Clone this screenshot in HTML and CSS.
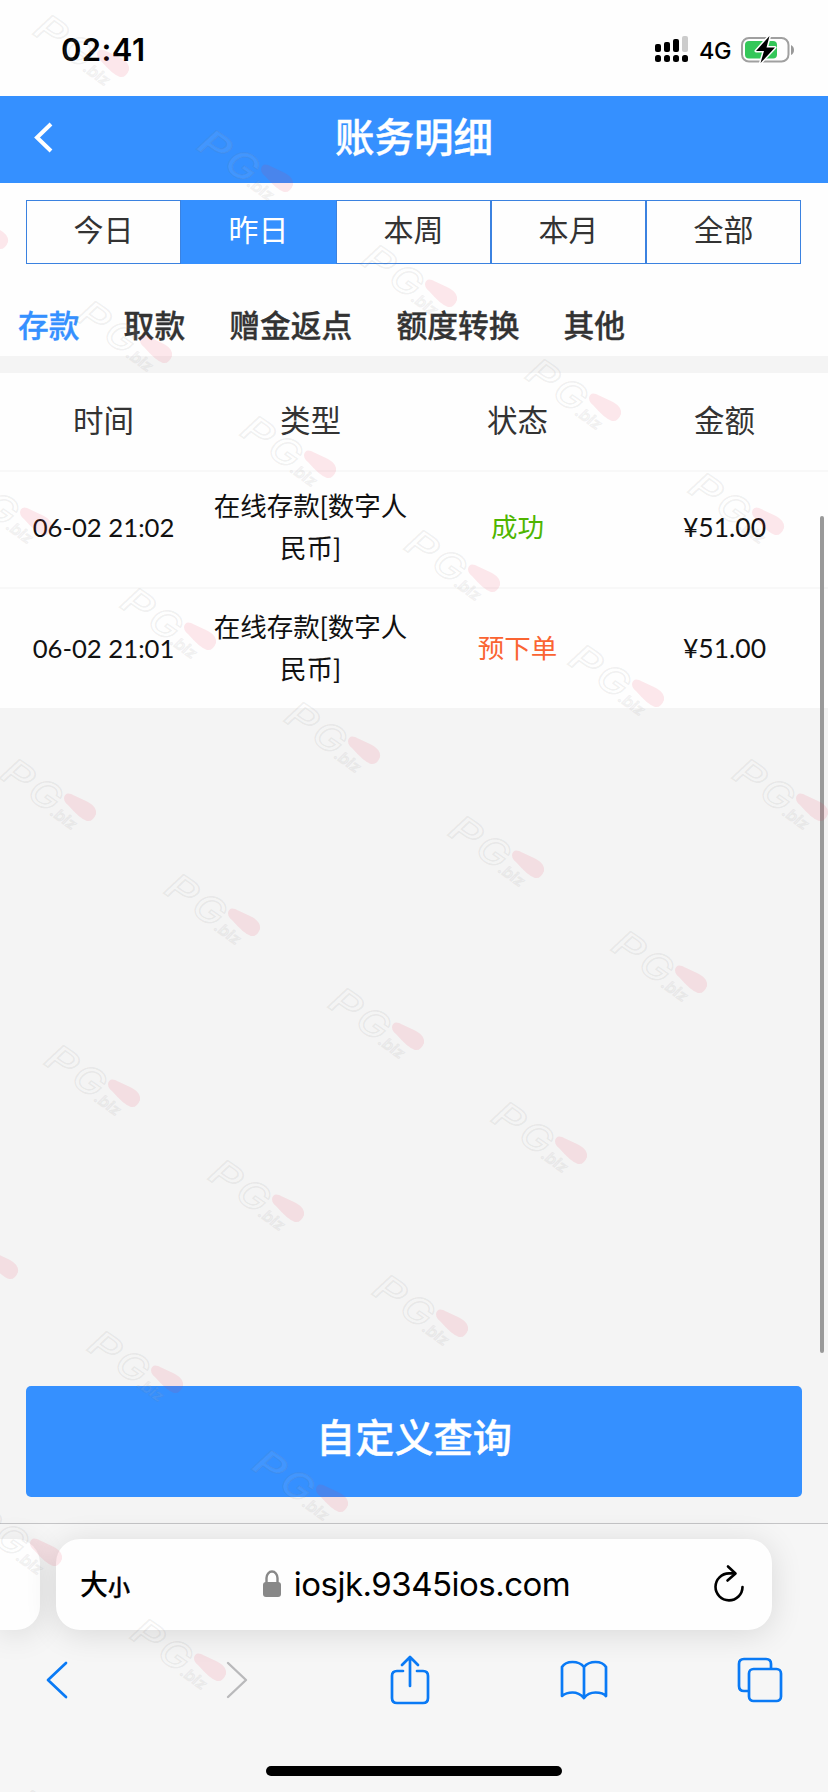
FILE: index.html
```html
<!DOCTYPE html>
<html lang="zh-CN">
<head>
<meta charset="utf-8">
<title>账务明细</title>
<link rel="stylesheet" href="styles.css">
</head>
<body>
<div class="phone">
  <div class="status">
    <span class="time">02:41</span>
    <div class="status-right">
      <svg class="signal" width="34" height="28" viewBox="0 0 34 28">
        <rect x="0" y="8" width="6" height="8" rx="2"/><rect x="9" y="6" width="6" height="10" rx="2"/><rect x="18" y="3" width="6" height="13" rx="2"/><rect x="27" y="0" width="6" height="16" rx="2" fill="#ccc"/>
        <rect x="0" y="19" width="6" height="7" rx="2.5"/><rect x="9" y="19" width="6" height="7" rx="2.5"/><rect x="18" y="19" width="6" height="7" rx="2.5"/><rect x="27" y="19" width="6" height="7" rx="2.5"/>
      </svg>
      <span class="net">4G</span>
      <svg class="battery" width="54" height="28" viewBox="0 0 54 28">
        <rect x="1" y="2" width="46.500" height="23.500" rx="7" fill="none" stroke="#a0a0a0" stroke-width="2"/>
        <rect x="4" y="5" width="32" height="17.500" rx="4" fill="#34c759"/>
        <path d="M50 9q3 1.500 3 5t-3 5z" fill="#999"/>
        <path d="M28.500 0 15 15h8l-3.500 12L34 11.500h-8.500z" fill="#000" stroke="#fff" stroke-width="3" paint-order="stroke" stroke-linejoin="round"/>
      </svg>
    </div>
  </div>

  <header class="header">
    <svg class="back" width="20" height="32" viewBox="0 0 20 32"><path d="M17 2 3 15.500 17 29" fill="none" stroke="#fff" stroke-width="4"/></svg>
    <h1 class="title">账务明细</h1>
  </header>

  <main class="page">
    <div class="ranges">
      <span class="range">今日</span><span class="range active">昨日</span><span class="range">本周</span><span class="range">本月</span><span class="range">全部</span>
    </div>
    <nav class="kinds">
      <span class="kind current">存款</span><span class="kind">取款</span><span class="kind">赠金返点</span><span class="kind">额度转换</span><span class="kind">其他</span>
    </nav>
    <section class="table">
      <div class="row head"><span>时间</span><span>类型</span><span>状态</span><span>金额</span></div>
      <div class="row"><span class="when">06-02 21:02</span><span class="type">在线存款[数字人<br>民币]</span><span class="ok">成功</span><span>¥51.00</span></div>
      <div class="row"><span class="when">06-02 21:01</span><span class="type">在线存款[数字人<br>民币]</span><span class="pending">预下单</span><span>¥51.00</span></div>
    </section>
    <button class="query">自定义查询</button>
    <i class="scrollbar"></i>
  </main>

  <footer class="browser">
    <div class="bars">
      <div class="bar-prev"></div>
      <div class="bar">
        <span class="size">大<small>小</small></span>
        <span class="url">
          <svg width="20" height="28" viewBox="0 0 20 28"><path d="M4.500 13V8a5.500 6.500 0 0 1 11 0v5" fill="none" stroke="#888" stroke-width="2.400"/><rect x="1" y="12" width="18" height="15" rx="3" fill="#888"/></svg>
          <span class="host">iosjk.9345ios.com</span>
        </span>
        <svg class="reload" width="32" height="38" viewBox="0 0 32 38"><path d="M21.500 9.400H16A13.500 13.500 0 1 0 29.500 23" fill="none" stroke="#000" stroke-width="2.600" stroke-linecap="round"/><path d="M15 2.500 22.500 9.500l-8 7" fill="none" stroke="#000" stroke-width="2.600" stroke-linecap="round" stroke-linejoin="round"/></svg>
      </div>
    </div>
    <div class="tools">
      <svg width="24" height="40" viewBox="0 0 24 40"><path d="M21 3 3 20l18 17" fill="none" stroke="#0a7af5" stroke-width="2.700" stroke-linecap="round" stroke-linejoin="round"/></svg>
      <svg width="24" height="40" viewBox="0 0 24 40"><path d="m3 3 18 17L3 37" fill="none" stroke="#b9b9bb" stroke-width="2.400" stroke-linecap="round" stroke-linejoin="round"/></svg>
      <svg width="40" height="50" viewBox="0 0 40 50"><g fill="none" stroke="#0a7af5" stroke-width="2.700" stroke-linecap="round" stroke-linejoin="round"><path d="M13 16H7q-5 0-5 5v22q0 5 5 5h26q5 0 5-5V21q0-5-5-5h-6"/><path d="M20 31V3M12 10l8-8 8 8"/></g></svg>
      <svg width="48" height="40" viewBox="0 0 48 40"><path d="M24 7V38M24 7Q20 2 12.500 2T2 7v29q4-3.500 10.500-3.500T24 38q4-5.500 11.500-5.500T46 36V7q-3-5-10.500-5T24 7" fill="none" stroke="#0a7af5" stroke-width="2.700" stroke-linejoin="round"/></svg>
      <svg width="46" height="46" viewBox="0 0 46 46"><g fill="none" stroke="#0a7af5" stroke-width="2.700"><path d="M11 34H7q-5 0-5-5V7q0-5 5-5h22q5 0 5 5v4"/><rect x="12" y="12" width="32" height="32" rx="4.500"/></g></svg>
    </div>
    <div class="home"></div>
  </footer>

  <svg class="marks" width="828" height="1792" viewBox="0 0 828 1792" aria-hidden="true">
    <defs>
      <g id="mark">
        <g transform="rotate(35)" class="mark-text">
          <text x="10" y="19" font-size="37" textLength="30" lengthAdjust="spacingAndGlyphs">P</text>
          <text x="43" y="19" font-size="37" textLength="31" lengthAdjust="spacingAndGlyphs">G</text>
          <text class="mark-tail" x="73" y="20" font-size="15" textLength="28" lengthAdjust="spacingAndGlyphs">.biz</text>
        </g>
        <path d="M63 42q1-6 7-4l17 8q9 5 8 12-3 8-9 7-7-2-19-16-4-3-4-7z" fill="#ef3050" fill-opacity=".11"/>
      </g>
    </defs>
    <use href="#mark" x="34" y="12"/><use href="#mark" x="198" y="127"/><use href="#mark" x="362" y="242"/><use href="#mark" x="526" y="356"/><use href="#mark" x="689" y="470"/>
    <use href="#mark" x="-87" y="184"/><use href="#mark" x="77" y="298"/><use href="#mark" x="241" y="413"/><use href="#mark" x="405" y="527"/><use href="#mark" x="569" y="642"/><use href="#mark" x="733" y="756"/>
    <use href="#mark" x="-43" y="470"/><use href="#mark" x="121" y="585"/><use href="#mark" x="285" y="699"/><use href="#mark" x="449" y="813"/><use href="#mark" x="612" y="928"/>
    <use href="#mark" x="1" y="756"/><use href="#mark" x="165" y="871"/><use href="#mark" x="329" y="985"/><use href="#mark" x="492" y="1099"/>
    <use href="#mark" x="45" y="1042"/><use href="#mark" x="209" y="1157"/><use href="#mark" x="373" y="1272"/>
    <use href="#mark" x="-77" y="1214"/><use href="#mark" x="88" y="1328"/><use href="#mark" x="253" y="1447"/>
    <use href="#mark" x="-33" y="1501"/><use href="#mark" x="131" y="1616"/><use href="#mark" x="14" y="1787"/>
  </svg>
</div>
</body>
</html>
```

FILE: styles.css
```css
* { box-sizing: border-box; }
body { margin: 0; background: #f4f4f4; font-family: Lato, "Noto Sans CJK SC", sans-serif; color: #333; }
svg { display: block; flex: none; }
.phone { position: relative; width: 828px; height: 1792px; overflow: hidden; display: flex; flex-direction: column; }

.status { height: 96px; background: #fefefe; display: flex; justify-content: space-between; align-items: center; padding: 3px 33px 0 61px; font-family: Inter, sans-serif; color: #000; }
.time { font-size: 31px; font-weight: 600; letter-spacing: .4px; }
.status-right { display: flex; align-items: center; }
.net { font-size: 23.500px; font-weight: 500; margin: 2px 10px 0 10px; letter-spacing: -.5px; }

.header { height: 87px; background: #3590ff; display: flex; align-items: center; padding: 0 34px; }
.back { margin-top: -4px; }
.title { margin: -10px 20px 0 0; flex: 1; text-align: center; font-family: "Noto Sans CJK SC", sans-serif; font-size: 39.500px; font-weight: 500; line-height: 60px; color: #fff; -webkit-text-stroke: .4px #fff; }

.page { position: relative; height: 1340px; display: flex; flex-direction: column; background: #f4f4f4; }
.ranges { display: flex; background: #fefefe; padding: 17px 27px 0 26px; height: 81px; }
.range { flex: 1; border: 1px solid #3b82e0; font-size: 30px; text-align: center; line-height: 57px; }
.range.active { background: #3590ff; color: #fff; border-color: #3590ff; }
.kinds { height: 92px; display: flex; gap: 44px; padding: 30px 18px 0; background: #fefefe; font-family: "Noto Sans CJK SC", sans-serif; font-size: 30.800px; line-height: 60px; font-weight: 500; -webkit-text-stroke: .3px; }
.current { color: #3590ff; }
.table { margin-top: 17px; background: #fefefe; }
.row { display: grid; grid-template-columns: repeat(4, 1fr); align-items: center; text-align: center; height: 121px; padding-bottom: 2px; font-size: 26.500px; line-height: 42px; color: #111; }
.row + .row { border-top: 2px solid #f8f8f8; }
.row.head { height: 97px; padding-bottom: 3px; font-size: 30.500px; color: #333; }
.row.head + .row { height: 117px; padding-bottom: 6px; }
.row > .when { font-size: 25.700px; }
.row > .ok { color: #4fb500; }
.row > .pending { color: #fa6432; }
.query { margin: auto 26px 26px; height: 111px; border: 0; border-radius: 5px; background: #3590ff; color: #fff; font-family: "Noto Sans CJK SC", sans-serif; font-size: 39.200px; font-weight: 500; line-height: 60px; padding: 0 0 13px; -webkit-text-stroke: .4px #fff; }
.scrollbar { position: absolute; left: 820px; top: 333px; width: 4px; height: 837px; border-radius: 3px; background: #999; }

.browser { flex: 1; position: relative; border-top: 1px solid #c4c4c6; background: #f6f6f6; display: flex; flex-direction: column; font-family: Inter, "Noto Sans CJK SC", sans-serif; color: #000; }
.bars { display: flex; gap: 16px; padding-top: 15px; }
.bar, .bar-prev { height: 91px; background: #fefefe; box-shadow: 0 4px 32px rgba(0,0,0,.12); }
.bar-prev { width: 40px; border-radius: 0 24px 24px 0; }
.bar { width: 716px; border-radius: 24px; display: flex; align-items: center; justify-content: space-between; padding: 0 27px 0 24px; }
.size { font-size: 28px; font-weight: 500; line-height: 40px; white-space: nowrap; width: 56px; padding-top: 2px; }
.size small { font-size: 22px; -webkit-text-stroke: .4px; }
.url { display: flex; align-items: center; gap: 12px; margin: -2px 17px 0 0; }
.host { font-size: 33px; letter-spacing: -.5px; white-space: nowrap; }
.reload { margin-top: -4px; }
.tools { display: grid; grid-template-columns: 180px 165px 170px 177px 46px; align-items: center; padding-left: 45px; height: 50px; margin-top: 25px; }
.home { width: 296px; height: 10px; border-radius: 5px; background: #000; margin: auto auto 16px; }

.marks { position: absolute; left: 0; top: 0; pointer-events: none; }
.mark-text { font-family: Inter, sans-serif; font-weight: 500; font-style: italic; fill: #fff; fill-opacity: .08; stroke: #777; stroke-opacity: .11; stroke-width: 1.400; }
.mark-tail { stroke-opacity: .09; }
```
